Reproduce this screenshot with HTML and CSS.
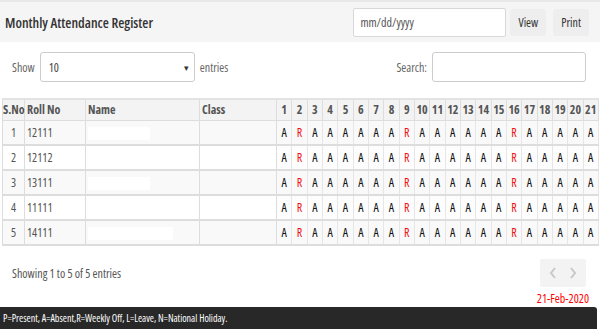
FILE: index.html
```html
<!DOCTYPE html>
<html lang="en">
	<head>
		<meta charset="UTF-8" />
		<meta name="viewport" content="width=device-width, initial-scale=1.0" />
		<link rel="stylesheet" href="styles.css">
		<title>Monthly Attendance Register</title>
	</head>
	<body>
		<div class="panel">
			<div class="panel-head">
				<h3 class="title">Monthly Attendance Register</h3>
				<div class="tools">
					<input class="date" type="text" placeholder="mm/dd/yyyy" />
					<button class="btn">View</button>
					<button class="btn">Print</button>
				</div>
			</div>

			<div class="panel-body">
				<div class="dt-top">
					<div class="length">
						Show
						<span class="select"><span>10</span><span class="caret">&#9662;</span></span>
						entries
					</div>
					<div class="search">
						Search: <input class="search-box" type="text" />
					</div>
				</div>

				<table class="register">
					<colgroup>
						<col class="c-sno" /><col class="c-roll" /><col class="c-name" /><col class="c-class" />
						<col span="21" class="c-day" />
					</colgroup>
					<thead>
						<tr>
							<th>S.No</th><th class="left">Roll No</th><th class="left">Name</th><th class="left">Class</th>
							<th>1</th><th>2</th><th>3</th><th>4</th><th>5</th><th>6</th><th>7</th><th>8</th><th>9</th><th>10</th>
							<th>11</th><th>12</th><th>13</th><th>14</th><th>15</th><th>16</th><th>17</th><th>18</th><th>19</th><th>20</th><th>21</th>
						</tr>
					</thead>
					<tbody>
						<tr class="odd">
							<td>1</td><td class="left">12111</td><td class="left"><span class="mask"></span></td><td></td>
							<td>A</td><td class="r">R</td><td>A</td><td>A</td><td>A</td><td>A</td><td>A</td><td>A</td><td class="r">R</td><td>A</td>
							<td>A</td><td>A</td><td>A</td><td>A</td><td>A</td><td class="r">R</td><td>A</td><td>A</td><td>A</td><td>A</td><td>A</td>
						</tr>
						<tr>
							<td>2</td><td class="left">12112</td><td class="left"></td><td></td>
							<td>A</td><td class="r">R</td><td>A</td><td>A</td><td>A</td><td>A</td><td>A</td><td>A</td><td class="r">R</td><td>A</td>
							<td>A</td><td>A</td><td>A</td><td>A</td><td>A</td><td class="r">R</td><td>A</td><td>A</td><td>A</td><td>A</td><td>A</td>
						</tr>
						<tr class="odd">
							<td>3</td><td class="left">13111</td><td class="left"><span class="mask"></span></td><td></td>
							<td>A</td><td class="r">R</td><td>A</td><td>A</td><td>A</td><td>A</td><td>A</td><td>A</td><td class="r">R</td><td>A</td>
							<td>A</td><td>A</td><td>A</td><td>A</td><td>A</td><td class="r">R</td><td>A</td><td>A</td><td>A</td><td>A</td><td>A</td>
						</tr>
						<tr>
							<td>4</td><td class="left">11111</td><td class="left"></td><td></td>
							<td>A</td><td class="r">R</td><td>A</td><td>A</td><td>A</td><td>A</td><td>A</td><td>A</td><td class="r">R</td><td>A</td>
							<td>A</td><td>A</td><td>A</td><td>A</td><td>A</td><td class="r">R</td><td>A</td><td>A</td><td>A</td><td>A</td><td>A</td>
						</tr>
						<tr class="odd">
							<td>5</td><td class="left">14111</td><td class="left"><span class="mask wide"></span></td><td></td>
							<td>A</td><td class="r">R</td><td>A</td><td>A</td><td>A</td><td>A</td><td>A</td><td>A</td><td class="r">R</td><td>A</td>
							<td>A</td><td>A</td><td>A</td><td>A</td><td>A</td><td class="r">R</td><td>A</td><td>A</td><td>A</td><td>A</td><td>A</td>
						</tr>
					</tbody>
				</table>

				<div class="dt-bottom">
					<div class="info">Showing 1 to 5 of 5 entries</div>
					<div class="pager">
						<svg width="10" height="14" viewBox="0 0 10 14"><path d="M7 2 L3 7 L7 12" fill="none" stroke="#c8c8c8" stroke-width="2" /></svg>
						<svg width="10" height="14" viewBox="0 0 10 14"><path d="M3 2 L7 7 L3 12" fill="none" stroke="#c8c8c8" stroke-width="2" /></svg>
					</div>
				</div>
				<div class="stamp">21-Feb-2020</div>
			</div>

			<div class="legend">P=Present, A=Absent,R=Weekly Off, L=Leave, N=National Holiday.</div>
		</div>
	</body>
</html>
```

FILE: styles.css
```css
* {
	padding: 0;
	margin: 0;
	box-sizing: border-box;
}

body {
	font-family: "Open Sans", Arial, sans-serif;
	font-stretch: 75%;
	font-size: 12px;
	color: #555;
	background-color: #fff;
}

.panel {
	width: 600px;
	height: 329px;
	overflow: hidden;
}

.panel-head {
	display: flex;
	justify-content: space-between;
	align-items: center;
	height: 42px;
	padding: 0 11px 0 5px;
	background-color: #f5f5f5;
	border-top: 2px solid #e8e8e8;
}

.title {
	font-size: 14px;
	font-weight: 600;
	color: #333;
}

.tools {
	display: flex;
	align-items: center;
	gap: 4px;
}

.date {
	width: 153px;
	height: 29px;
	padding: 0 6px;
	border: 1px solid #d8d8d8;
	border-radius: 2px;
	font-family: inherit;
	font-stretch: 75%;
	font-size: 12px;
	color: #555;
}

.date::placeholder {
	color: #555;
}

.btn {
	height: 27px;
	padding: 0 8px;
	border: none;
	border-radius: 3px;
	background-color: #eeeeee;
	font-family: inherit;
	font-stretch: 75%;
	font-size: 12px;
	color: #333;
}

.btn + .btn {
	margin-left: 3px;
}

.panel-body {
	padding: 10px 0 0 0;
}

.dt-top {
	display: flex;
	justify-content: space-between;
	align-items: center;
	height: 30px;
	padding: 0 14px 0 12px;
}

.length,
.search {
	display: flex;
	align-items: center;
	gap: 5px;
	color: #666;
}

.select {
	display: flex;
	justify-content: space-between;
	align-items: center;
	width: 155px;
	height: 30px;
	padding: 0 5px 0 8px;
	border: 1px solid #ccc;
	border-radius: 3px;
	color: #444;
	background-color: #fff;
}

.caret {
	font-size: 9px;
	color: #333;
}

.search-box {
	width: 154px;
	height: 30px;
	border: 1px solid #ccc;
	border-radius: 3px;
}

.register {
	width: 596px;
	margin: 16px 0 0 2px;
	border-collapse: collapse;
	table-layout: fixed;
}

.c-sno { width: 22px; }
.c-roll { width: 61px; }
.c-name { width: 114px; }
.c-class { width: 77px; }
.c-day { width: 15.333px; }

.register th {
	height: 21px;
	font-weight: 700;
	color: #555;
	background-color: #f3f3f3;
	border: 1px solid #ddd;
	border-top: 2px solid #e3e3e3;
	text-align: center;
	padding: 0;
	white-space: nowrap;
}

.register td {
	height: 25px;
	border-left: 1px solid #ddd;
	border-right: 1px solid #ddd;
	border-bottom: 2px solid #ddd;
	text-align: center;
	padding: 0;
	color: #555;
}

.register th.left,
.register td.left {
	text-align: left;
	padding-left: 2px;
}

.register tr.odd td {
	background-color: #f9f9f9;
}

.register td:nth-child(n+5) {
	color: #111;
	background-color: #fdfdfd;
	border-left: 1px solid #e6e6e6;
	border-right: 1px solid #e6e6e6;
}

.register td.r {
	color: #f01010;
}

.mask {
	display: inline-block;
	width: 62px;
	height: 13px;
	vertical-align: middle;
	background-color: #fff;
}

.mask.wide {
	width: 85px;
}

.dt-bottom {
	display: flex;
	justify-content: space-between;
	align-items: center;
	margin-top: 13px;
	padding: 0 14px 0 12px;
}

.pager {
	display: flex;
	justify-content: space-between;
	align-items: center;
	width: 46px;
	height: 28px;
	padding: 0 8px;
	background-color: #f3f3f3;
	border-radius: 2px;
}

.stamp {
	text-align: right;
	padding-right: 11px;
	margin-top: 3px;
	color: #f00;
	font-size: 12px;
}

.legend {
	width: 597px;
	height: 22px;
	padding: 4px 3px;
	background-color: #282828;
	color: #fff;
	font-size: 10px;
	border-radius: 0 3px 0 0;
}
```
